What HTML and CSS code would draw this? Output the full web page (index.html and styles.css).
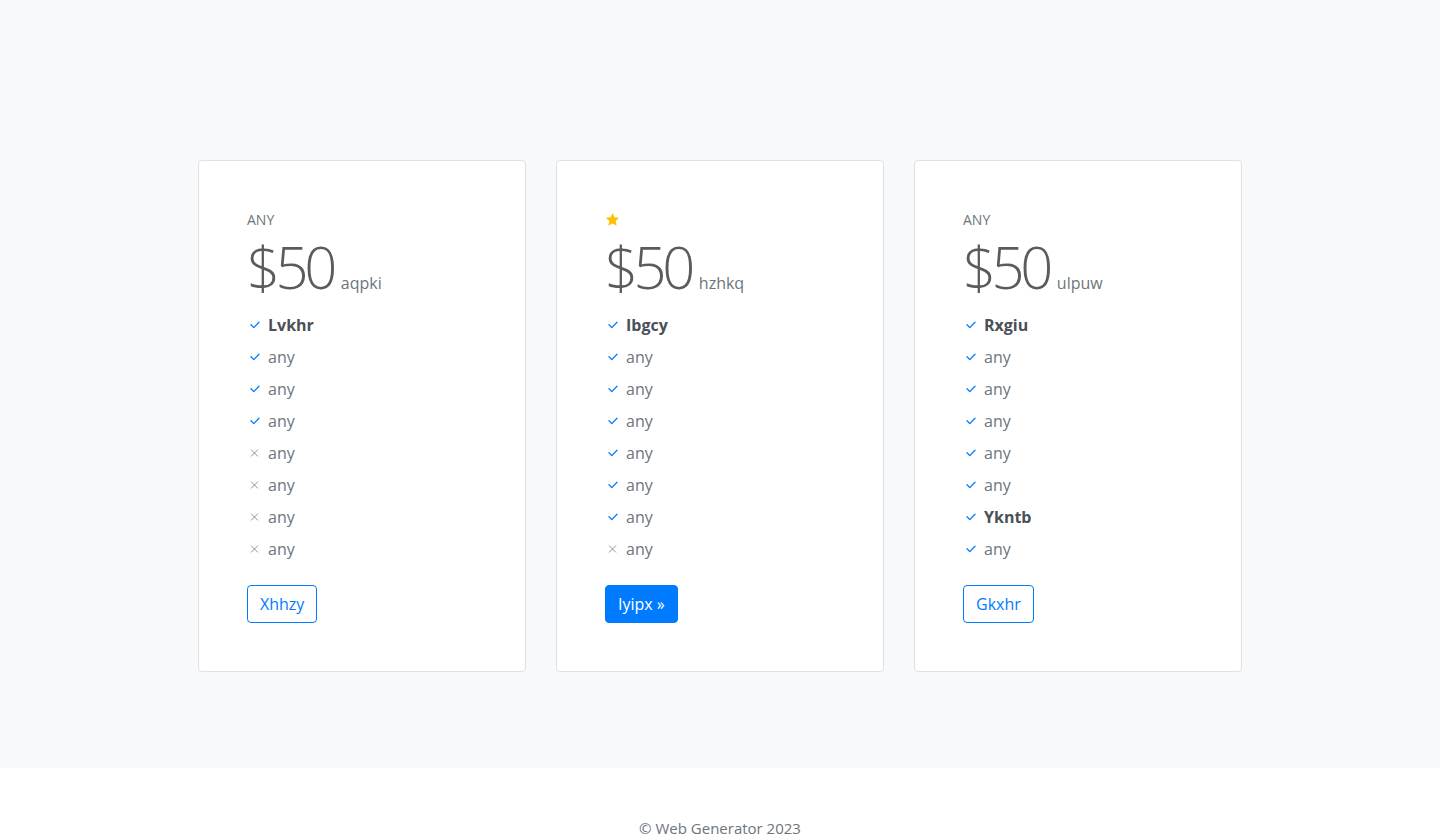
FILE: index.html
```html
<!DOCTYPE html>
<html lang="en">
<head>
<meta charset="utf-8">
<title>Pricing</title>
<link rel="stylesheet" href="styles.css">
</head>
<body>
<section class="pricing">
  <div class="cards">
    <div class="card">
      <div class="label">ANY</div>
      <div class="price"><span class="amount">$50</span><span class="period">aqpki</span></div>
      <ul class="features">
        <li class="yes strong"><svg class="ic" viewBox="0 0 10 8"><polyline points="1,3.8 3.8,6.6 9,1.2"/></svg>Lvkhr</li>
        <li class="yes"><svg class="ic" viewBox="0 0 10 8"><polyline points="1,3.8 3.8,6.6 9,1.2"/></svg>any</li>
        <li class="yes"><svg class="ic" viewBox="0 0 10 8"><polyline points="1,3.8 3.8,6.6 9,1.2"/></svg>any</li>
        <li class="yes"><svg class="ic" viewBox="0 0 10 8"><polyline points="1,3.8 3.8,6.6 9,1.2"/></svg>any</li>
        <li class="no"><svg class="ic" viewBox="0 0 10 8"><path d="M1.5 0.5l7 7M8.5 0.5l-7 7"/></svg>any</li>
        <li class="no"><svg class="ic" viewBox="0 0 10 8"><path d="M1.5 0.5l7 7M8.5 0.5l-7 7"/></svg>any</li>
        <li class="no"><svg class="ic" viewBox="0 0 10 8"><path d="M1.5 0.5l7 7M8.5 0.5l-7 7"/></svg>any</li>
        <li class="no"><svg class="ic" viewBox="0 0 10 8"><path d="M1.5 0.5l7 7M8.5 0.5l-7 7"/></svg>any</li>
      </ul>
      <a class="btn btn-outline" href="#">Xhhzy</a>
    </div>
    <div class="card">
      <div class="label"><svg class="star" width="15" height="15" viewBox="0 0 24 24"><path fill="#ffc107" d="M12 1.5l3.2 6.9 7.5.9-5.5 5.2 1.4 7.5L12 18.3 5.4 22l1.4-7.5L1.3 9.3l7.5-.9z"/></svg></div>
      <div class="price"><span class="amount">$50</span><span class="period">hzhkq</span></div>
      <ul class="features">
        <li class="yes strong"><svg class="ic" viewBox="0 0 10 8"><polyline points="1,3.8 3.8,6.6 9,1.2"/></svg>Ibgcy</li>
        <li class="yes"><svg class="ic" viewBox="0 0 10 8"><polyline points="1,3.8 3.8,6.6 9,1.2"/></svg>any</li>
        <li class="yes"><svg class="ic" viewBox="0 0 10 8"><polyline points="1,3.8 3.8,6.6 9,1.2"/></svg>any</li>
        <li class="yes"><svg class="ic" viewBox="0 0 10 8"><polyline points="1,3.8 3.8,6.6 9,1.2"/></svg>any</li>
        <li class="yes"><svg class="ic" viewBox="0 0 10 8"><polyline points="1,3.8 3.8,6.6 9,1.2"/></svg>any</li>
        <li class="yes"><svg class="ic" viewBox="0 0 10 8"><polyline points="1,3.8 3.8,6.6 9,1.2"/></svg>any</li>
        <li class="yes"><svg class="ic" viewBox="0 0 10 8"><polyline points="1,3.8 3.8,6.6 9,1.2"/></svg>any</li>
        <li class="no"><svg class="ic" viewBox="0 0 10 8"><path d="M1.5 0.5l7 7M8.5 0.5l-7 7"/></svg>any</li>
      </ul>
      <a class="btn btn-primary" href="#">Iyipx »</a>
    </div>
    <div class="card">
      <div class="label">ANY</div>
      <div class="price"><span class="amount">$50</span><span class="period">ulpuw</span></div>
      <ul class="features">
        <li class="yes strong"><svg class="ic" viewBox="0 0 10 8"><polyline points="1,3.8 3.8,6.6 9,1.2"/></svg>Rxgiu</li>
        <li class="yes"><svg class="ic" viewBox="0 0 10 8"><polyline points="1,3.8 3.8,6.6 9,1.2"/></svg>any</li>
        <li class="yes"><svg class="ic" viewBox="0 0 10 8"><polyline points="1,3.8 3.8,6.6 9,1.2"/></svg>any</li>
        <li class="yes"><svg class="ic" viewBox="0 0 10 8"><polyline points="1,3.8 3.8,6.6 9,1.2"/></svg>any</li>
        <li class="yes"><svg class="ic" viewBox="0 0 10 8"><polyline points="1,3.8 3.8,6.6 9,1.2"/></svg>any</li>
        <li class="yes"><svg class="ic" viewBox="0 0 10 8"><polyline points="1,3.8 3.8,6.6 9,1.2"/></svg>any</li>
        <li class="yes strong"><svg class="ic" viewBox="0 0 10 8"><polyline points="1,3.8 3.8,6.6 9,1.2"/></svg>Ykntb</li>
        <li class="yes"><svg class="ic" viewBox="0 0 10 8"><polyline points="1,3.8 3.8,6.6 9,1.2"/></svg>any</li>
      </ul>
      <a class="btn btn-outline" href="#">Gkxhr</a>
    </div>
  </div>
</section>
<footer class="footer">© Web Generator 2023</footer>
</body>
</html>
```
FILE: styles.css
```css
* { box-sizing: border-box; }
html, body { margin: 0; padding: 0; }
body {
  font-family: "Open Sans", "Noto Sans", sans-serif;
  font-size: 16px;
  line-height: 1.5;
  color: #212529;
  background: #fff;
}
.pricing {
  background: #f8f9fa;
  padding: 160px 0 96px;
}
.cards {
  display: flex;
  justify-content: center;
  gap: 30px;
}
.card {
  width: 328px;
  background: #fff;
  border: 1px solid #dee2e6;
  border-radius: 4px;
  padding: 48px;
}
.label {
  font-size: 14px;
  line-height: 21px;
  height: 21px;
  color: #6c757d;
  display: flex;
  align-items: center;
}
.star { display: block; margin-top: -1px; }
.price {
  margin-top: 5px;
  display: flex;
  align-items: baseline;
  color: #5b5b5b;
}
.amount {
  font-size: 58px;
  font-weight: 300;
  line-height: 64px;
  letter-spacing: -4.5px;
}
.period {
  font-size: 16px;
  line-height: 1;
  color: #6c757d;
  margin-left: 8px;
}
.features {
  list-style: none;
  margin: 10px 0 0;
  padding: 0;
}
.features li {
  line-height: 24px;
  padding: 4px 0;
  color: #6c757d;
  display: flex;
  align-items: center;
}
.features li.strong { font-weight: 700; color: #495057; }
.ic {
  width: 10px;
  height: 8px;
  margin: 0 8px 0 3px;
  fill: none;
  stroke-width: 1.3;
  stroke-linecap: round;
  stroke-linejoin: round;
}
.yes .ic { stroke: #007bff; }
.no .ic { stroke: #8a9299; width: 9px; height: 8px; margin: 0 9px 0 3px; stroke-width: 1.1; }
.btn {
  display: inline-block;
  margin-top: 20px;
  padding: 6px 12px;
  font-size: 16px;
  line-height: 24px;
  border: 1px solid #007bff;
  border-radius: 4px;
  text-decoration: none;
}
.btn-outline { color: #007bff; background: #fff; }
.btn-primary { color: #fff; background: #007bff; }
.footer {
  text-align: center;
  padding: 49px 0 24px;
  color: #6c757d;
  font-size: 15px;
}
```
